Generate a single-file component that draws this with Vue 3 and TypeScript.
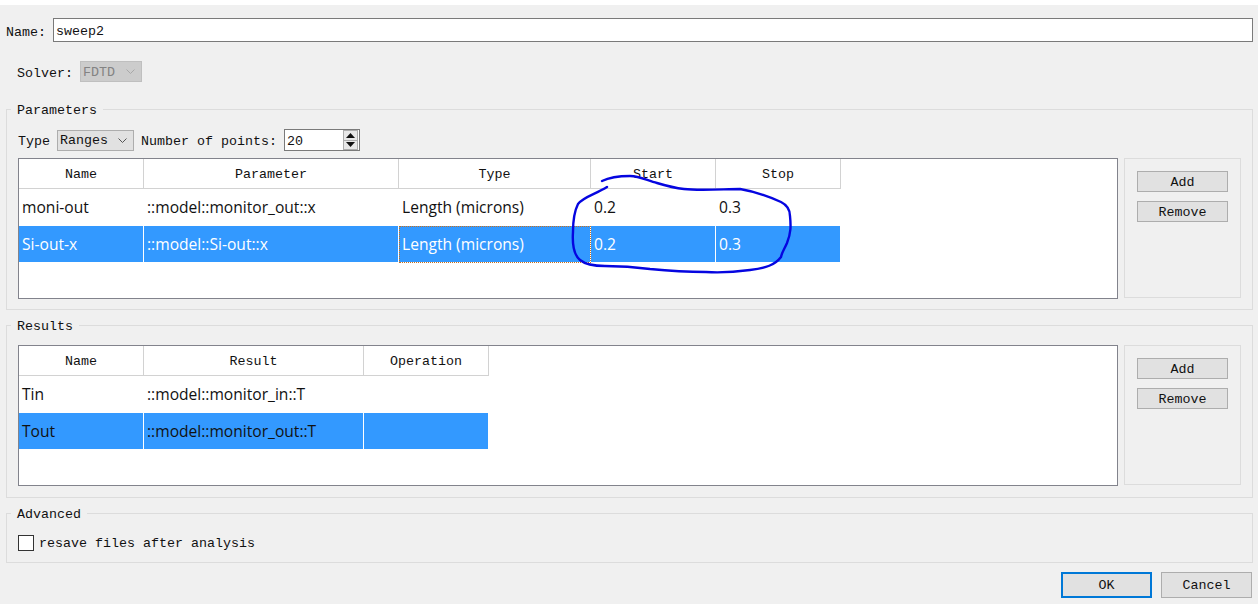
<script setup lang="ts">
interface Column { title: string; width: number }
interface Section {
  title: string
  columns: Column[]
  rows: string[][]
  light: boolean
}
const sections: Section[] = [
  {
    title: 'Parameters',
    light: true,
    columns: [
      { title: 'Name', width: 125 },
      { title: 'Parameter', width: 255 },
      { title: 'Type', width: 192 },
      { title: 'Start', width: 125 },
      { title: 'Stop', width: 125 },
    ],
    rows: [
      ['moni-out', '::model::monitor_out::x', 'Length (microns)', '0.2', '0.3'],
      ['Si-out-x', '::model::Si-out::x', 'Length (microns)', '0.2', '0.3'],
    ],
  },
  {
    title: 'Results',
    light: false,
    columns: [
      { title: 'Name', width: 125 },
      { title: 'Result', width: 220 },
      { title: 'Operation', width: 125 },
    ],
    rows: [
      ['Tin', '::model::monitor_in::T', ''],
      ['Tout', '::model::monitor_out::T', ''],
    ],
  },
]
const stroke =
  'M602 181 C608 178 618 176 630 176 C640 176 648 181 657 183 C667 186 675 188 684 189 C700 191 725 189 740 189 C752 191 770 197 781 202 C787 205 790 210 790 216 C791 226 791 233 787 243 C784 250 782 252 781 257 C775 265 766 268 750 270 C735 272 722 273 706 272 C690 272 670 271 650 269 C635 267 618 266 605 266 C595 266 586 265 580 260 C574 255 572 247 573 232 C573 220 574 212 578 204 C583 197 596 194 607 187'
</script>

<template>
  <div class="dialog">
    <div class="name-row">
      <label class="label">Name:</label>
      <div class="text-input">sweep2</div>
    </div>

    <div class="solver-row">
      <label class="label">Solver:</label>
      <div class="combo disabled">
        <span>FDTD</span>
        <svg class="chev" width="9" height="5" viewBox="0 0 9 5"><path d="M0.5 0.5 L4.5 4.5 L8.5 0.5" fill="none" stroke="#a8a8a8" /></svg>
      </div>
    </div>

    <section v-for="(s, si) in sections" :key="s.title" class="group" :class="'group-' + si">
      <div class="legend">{{ s.title }}</div>

      <div v-if="si === 0" class="type-row">
        <span>Type</span>
        <div class="combo ranges">
          <span>Ranges</span>
          <svg class="chev" width="9" height="5" viewBox="0 0 9 5"><path d="M0.5 0.5 L4.5 4.5 L8.5 0.5" fill="none" stroke="#555" /></svg>
        </div>
        <span class="points-label">Number of points:</span>
        <div class="spin">
          <span>20</span>
          <div class="spin-btns">
            <div class="spin-btn"><svg width="9" height="5" viewBox="0 0 9 5"><path d="M4.5 0 L9 5 H0 Z" fill="#111" /></svg></div>
            <div class="spin-btn"><svg width="9" height="5" viewBox="0 0 9 5"><path d="M0 0 H9 L4.5 5 Z" fill="#111" /></svg></div>
          </div>
        </div>
      </div>

      <div class="table-row">
        <div class="table">
          <div class="tr head">
            <div v-for="c in s.columns" :key="c.title" class="th" :style="{ width: c.width + 'px' }">{{ c.title }}</div>
          </div>
          <div
            v-for="(r, ri) in s.rows"
            :key="ri"
            class="tr body"
            :class="{ selected: ri === 1, light: s.light }"
          >
            <div
              v-for="(cell, ci) in r"
              :key="ci"
              class="td"
              :class="{ focus: si === 0 && ri === 1 && ci === 2 }"
              :style="{ width: s.columns[ci].width + 'px' }"
            >{{ cell }}</div>
          </div>
        </div>
        <div class="side">
          <button class="btn">Add</button>
          <button class="btn">Remove</button>
        </div>
      </div>
    </section>

    <section class="group group-adv">
      <div class="legend">Advanced</div>
      <div class="check-row">
        <span class="check"></span>
        <span class="check-text">resave files after analysis</span>
      </div>
    </section>

    <div class="footer">
      <button class="btn big default">OK</button>
      <button class="btn big">Cancel</button>
    </div>

    <svg class="ink" width="1258" height="604" viewBox="0 0 1258 604">
      <path :d="stroke" fill="none" stroke="#0505e0" stroke-width="2.4" stroke-linecap="round" stroke-linejoin="round" />
    </svg>
  </div>
</template>

<style>
html, body { margin: 0; background: #f0f0f0; }
</style>

<style scoped>
* { box-sizing: border-box; }
.dialog {
  position: relative;
  width: 1258px;
  height: 604px;
  overflow: hidden;
  background: #f0f0f0;
  border-top: 5px solid #fff;
  padding: 13px 5px 0 6px;
  font-family: "Liberation Mono", monospace;
  font-size: 13.33px;
  line-height: 16px;
  color: #111;
}
.name-row { display: flex; align-items: center; gap: 7px; height: 24px; }
.label { padding-top: 4px; }
.name-row .label { padding-top: 6px; }
.text-input {
  flex: 1;
  height: 24px;
  background: #fff;
  border: 1px solid #7a7a7a;
  padding: 5px 2px 0;
}
.solver-row {
  display: flex;
  align-items: center;
  gap: 7px;
  height: 21px;
  margin: 19px 0 27px 11px;
}
.combo {
  display: flex;
  align-items: center;
  justify-content: space-between;
  height: 21px;
  padding: 2px 6px 0 2px;
  border: 1px solid #adadad;
  background: #e1e1e1;
}
.chev { margin-top: -2px; }
.combo.disabled {
  width: 62px;
  background: #ccc;
  border-color: #bfbfbf;
  color: #838383;
}
.combo.ranges { width: 77px; margin: 0 7px 0 7px; }
.group {
  position: relative;
  border: 1px solid #dcdcdc;
  padding: 0 11px;
}
.legend {
  width: fit-content;
  margin: -7px 0 0 -6px;
  padding: 0 6px;
  position: relative;
  left: -1px;
  background: #f0f0f0;
  height: 16px;
}
.group-0 { height: 201px; }
.group-1 { height: 173px; margin-top: 15px; }
.group-1 .table-row { margin-top: 10px; }
.group-adv { height: 50px; margin-top: 15px; }
.type-row { display: flex; align-items: center; height: 22px; margin-top: 10px; }
.type-row > span { padding-top: 4px; }
.points-label { margin-right: 7px; }
.spin {
  display: flex;
  align-items: center;
  justify-content: space-between;
  width: 76px;
  height: 22px;
  background: #fff;
  border: 1px solid #7a7a7a;
  padding: 0 1px 0 2px;
}
.spin > span { padding-top: 4px; }
.spin-btns { display: flex; flex-direction: column; width: 15px; height: 20px; border: 1px solid #adadad; }
.spin-btn { flex: 1; display: flex; align-items: center; justify-content: center; background: #e8e8e8; }
.spin-btn + .spin-btn { border-top: 1px solid #adadad; }
.table-row { display: flex; gap: 6px; margin-top: 7px; }
.table {
  width: 1100px;
  height: 141px;
  background: #fff;
  border: 1px solid #82838c;
}
.tr { display: flex; }
.head { height: 30px; }
.th {
  display: flex;
  align-items: center;
  justify-content: center;
  padding-top: 2px;
  border-right: 1px solid #d2d2d2;
  border-bottom: 1px solid #d2d2d2;
}
.body {
  height: 37px;
  font-family: "Open Sans", "Noto Sans", sans-serif;
  font-size: 15.6px;
  color: #111;
}
.td {
  display: flex;
  align-items: center;
  padding: 0 3px;
  border-right: 1px solid transparent;
  border-bottom: 1px solid transparent;
  white-space: nowrap;
}
.selected .td {
  background: #3399ff;
  background-clip: padding-box;
  border-right-color: #fff;
  border-bottom-color: #fff;
}
.selected.light .td { color: #fff; }
.selected .td.focus { outline: 1px dotted #c8701c; outline-offset: -1px; }
.selected .td:last-child { border-right-color: transparent; }
.side {
  display: flex;
  flex-direction: column;
  align-items: center;
  gap: 9px;
  width: 117px;
  height: 140px;
  padding-top: 12px;
  border: 1px solid #dcdcdc;
}
.btn {
  width: 91px;
  height: 21px;
  padding: 2px 0 0;
  font: inherit;
  color: #111;
  background: #e1e1e1;
  border: 1px solid #adadad;
}
.check-row { display: flex; align-items: center; gap: 5px; margin-top: 11px; }
.check {
  width: 16px;
  height: 16px;
  background: #fff;
  border: 1px solid #333;
}
.check-text { padding-top: 2px; }
.footer { display: flex; justify-content: flex-end; gap: 9px; margin-top: 9px; padding-right: 1px; }
.btn.big { height: 26px; padding-top: 2px; }
.btn.default { border: 2px solid #0078d7; }
.ink { position: absolute; left: 0; top: -5px; pointer-events: none; }
</style>
